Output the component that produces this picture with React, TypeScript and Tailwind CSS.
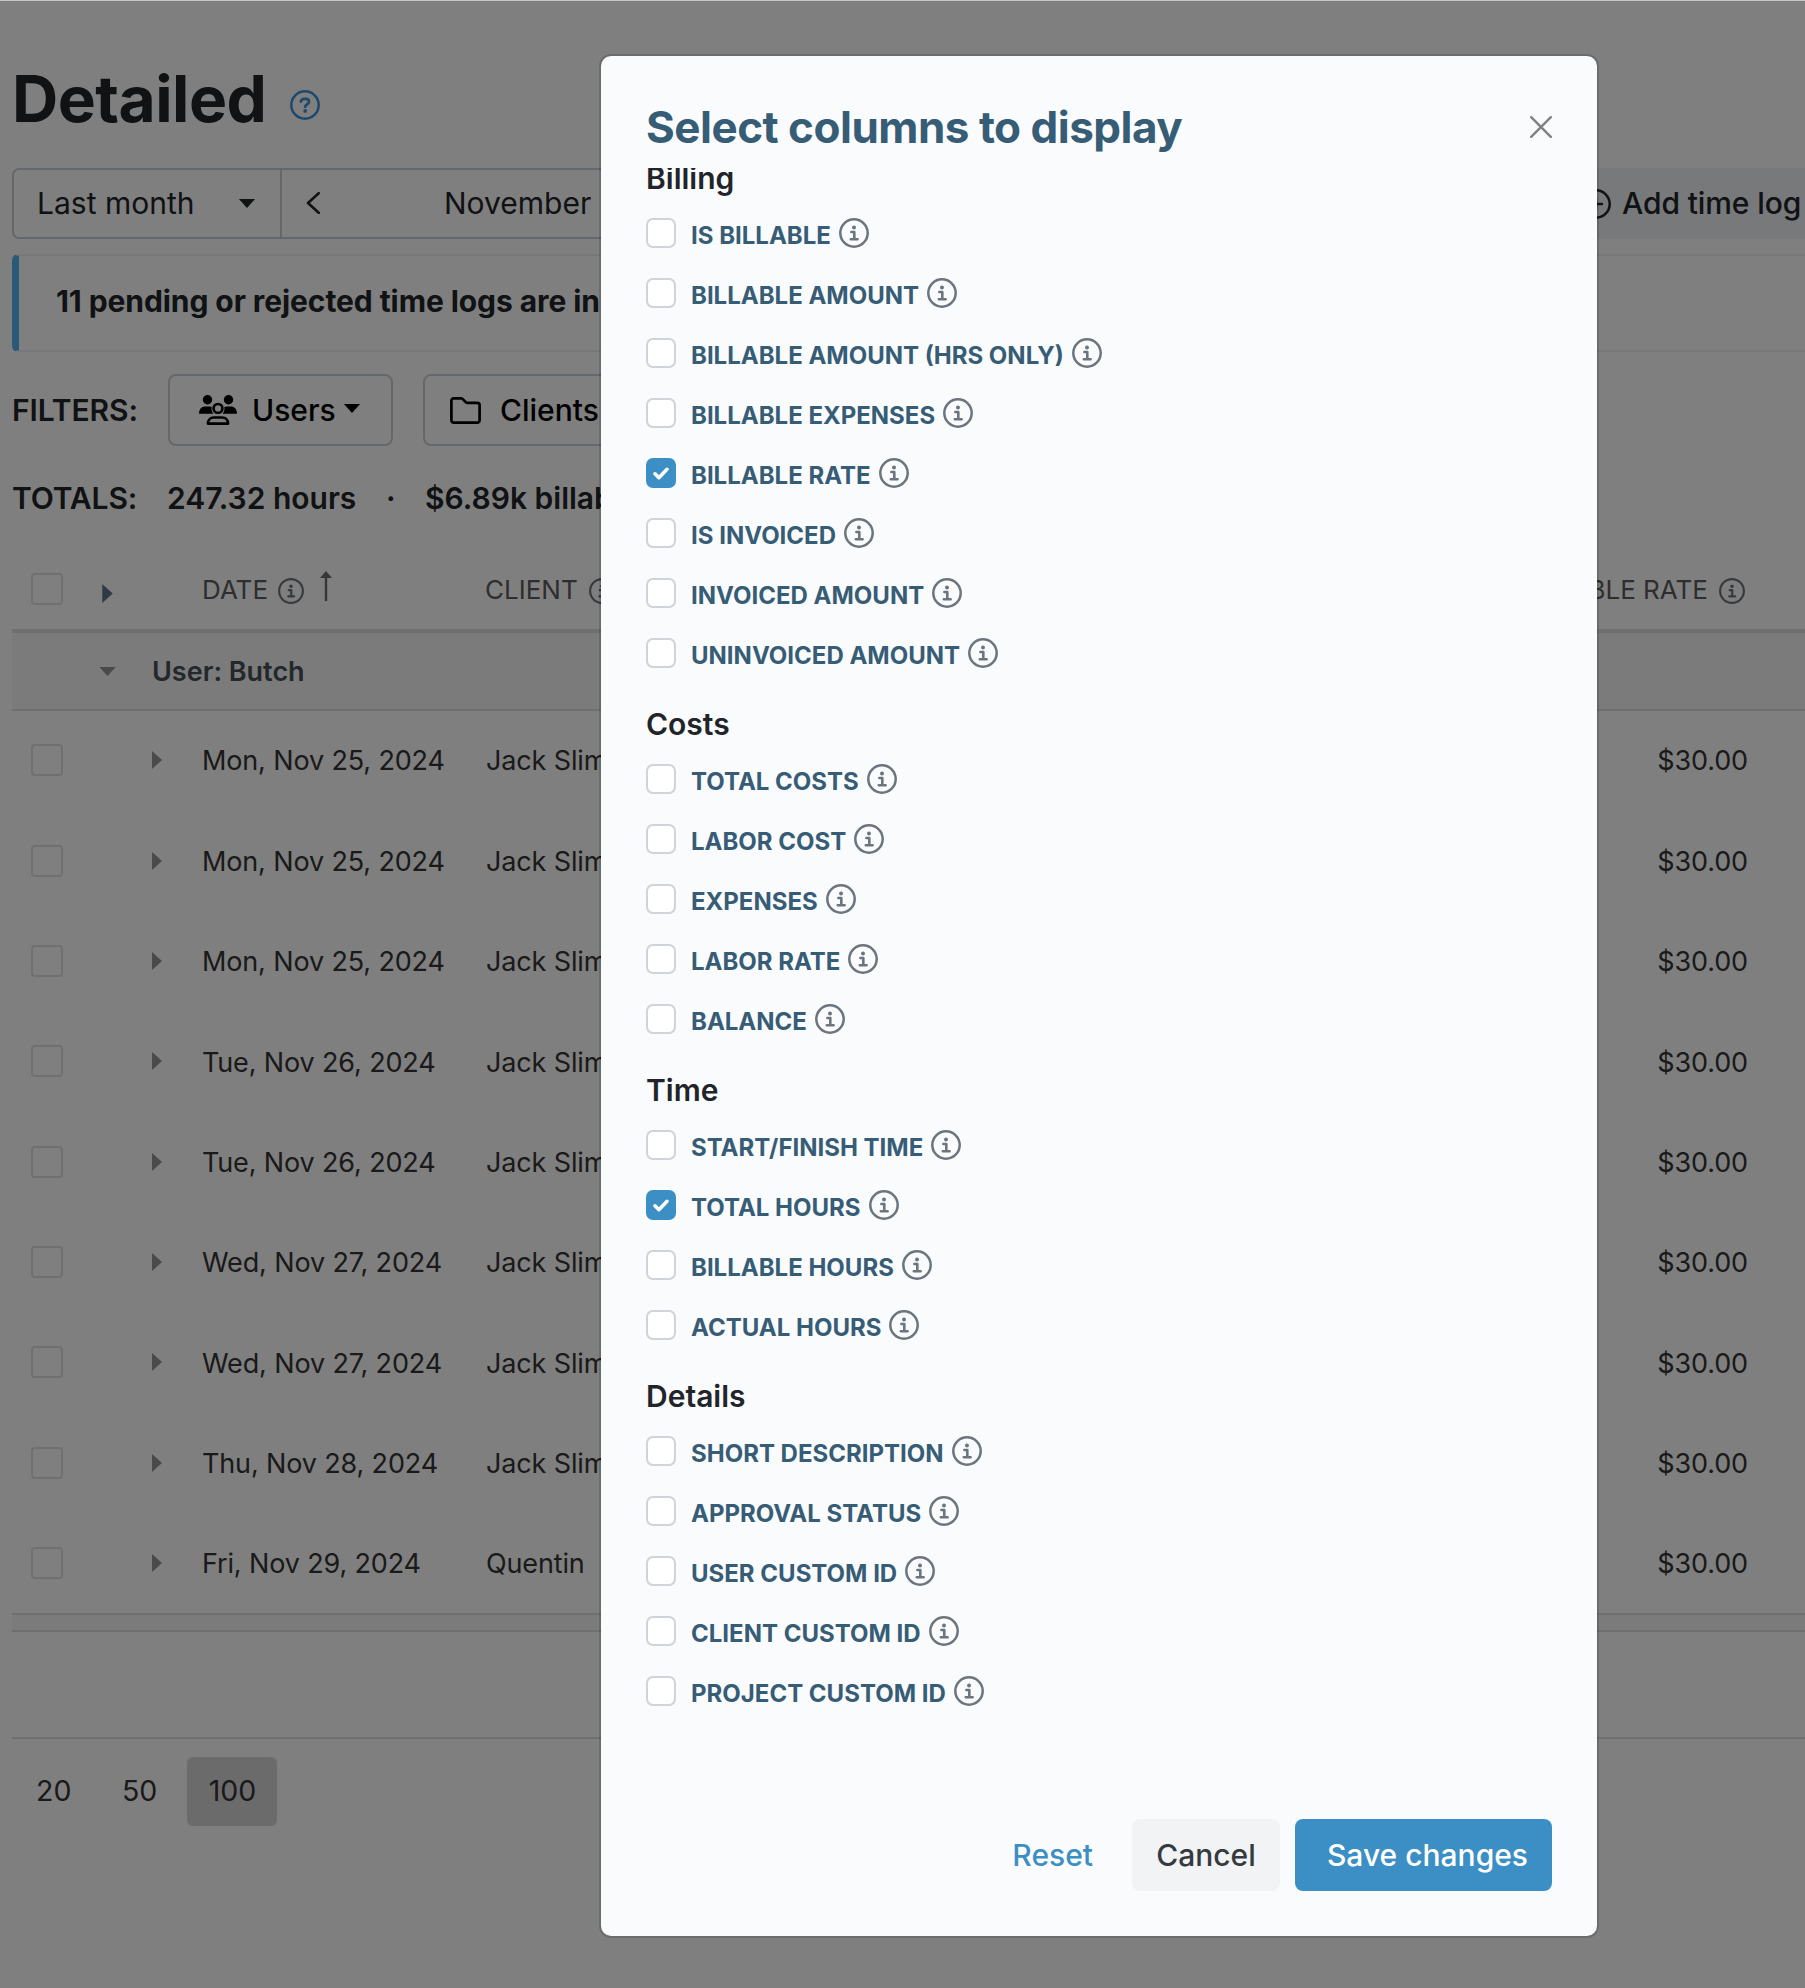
import { useState } from "react";

const sections = [
  {
    title: "Billing",
    columns: [
      "IS BILLABLE",
      "BILLABLE AMOUNT",
      "BILLABLE AMOUNT (HRS ONLY)",
      "BILLABLE EXPENSES",
      "BILLABLE RATE",
      "IS INVOICED",
      "INVOICED AMOUNT",
      "UNINVOICED AMOUNT",
    ],
  },
  {
    title: "Costs",
    columns: ["TOTAL COSTS", "LABOR COST", "EXPENSES", "LABOR RATE", "BALANCE"],
  },
  {
    title: "Time",
    columns: ["START/FINISH TIME", "TOTAL HOURS", "BILLABLE HOURS", "ACTUAL HOURS"],
  },
  {
    title: "Details",
    columns: [
      "SHORT DESCRIPTION",
      "APPROVAL STATUS",
      "USER CUSTOM ID",
      "CLIENT CUSTOM ID",
      "PROJECT CUSTOM ID",
    ],
  },
];

const logs = [
  { date: "Mon, Nov 25, 2024", client: "Jack Slim", rate: "$30.00" },
  { date: "Mon, Nov 25, 2024", client: "Jack Slim", rate: "$30.00" },
  { date: "Mon, Nov 25, 2024", client: "Jack Slim", rate: "$30.00" },
  { date: "Tue, Nov 26, 2024", client: "Jack Slim", rate: "$30.00" },
  { date: "Tue, Nov 26, 2024", client: "Jack Slim", rate: "$30.00" },
  { date: "Wed, Nov 27, 2024", client: "Jack Slim", rate: "$30.00" },
  { date: "Wed, Nov 27, 2024", client: "Jack Slim", rate: "$30.00" },
  { date: "Thu, Nov 28, 2024", client: "Jack Slim", rate: "$30.00" },
  { date: "Fri, Nov 29, 2024", client: "Quentin", rate: "$30.00" },
];

function InfoIcon({ className }: { className: string }) {
  return (
    <svg viewBox="0 0 30 30" fill="none" stroke="currentColor" className={`shrink-0 ${className}`}>
      <circle cx="15" cy="15" r="13.7" strokeWidth="2.5" />
      <circle cx="15" cy="9.4" r="2" fill="currentColor" stroke="none" />
      <path d="M12.4 14h2.9v7M11.8 21.2h6.8" strokeWidth="2.6" strokeLinecap="round" strokeLinejoin="round" />
    </svg>
  );
}

function CaretDown({ className }: { className: string }) {
  return (
    <svg viewBox="0 0 18 10" fill="currentColor" className={`shrink-0 ${className}`}>
      <path d="M0 0h18L9 10z" />
    </svg>
  );
}

function CaretRight({ className }: { className: string }) {
  return (
    <svg viewBox="0 0 10 18" fill="currentColor" className={`shrink-0 ${className}`}>
      <path d="M0 0l10 9L0 18z" />
    </svg>
  );
}

function UsersIcon() {
  return (
    <svg viewBox="0 0 38 30" fill="currentColor" className="ml-[29px] h-[30px] w-[38px] shrink-0">
      <circle cx="8.5" cy="4.7" r="4.7" />
      <circle cx="29.5" cy="4.7" r="4.7" />
      <path d="M0 18.7c0-4.6 2.6-7.2 6.3-7.2h4.2c.9 0 1.6.2 2.2.5-.5 2.6.2 5 1.7 6.7z" />
      <path d="M38 18.7c0-4.6-2.6-7.2-6.3-7.2h-4.2c-.9 0-1.6.2-2.2.5.5 2.6-.2 5-1.7 6.7z" />
      <circle cx="19" cy="13.4" r="4.4" fill="none" stroke="currentColor" strokeWidth="2.6" />
      <path
        d="M8.9 28.6c.2-3.7 2.5-6.1 5.8-6.1h8.6c3.3 0 5.6 2.4 5.8 6.1z"
        fill="none"
        stroke="currentColor"
        strokeWidth="2.6"
        strokeLinejoin="round"
      />
    </svg>
  );
}

function FolderIcon() {
  return (
    <svg viewBox="0 0 31 27" fill="none" stroke="currentColor" className="ml-[25px] h-[27px] w-[31px] shrink-0">
      <path
        d="M3.7 1.4h7.3c.7 0 1.2.2 1.7.7l3.2 3.2c.4.4.9.6 1.5.6h9.900a2.300 2.300 0 0 1 2.300 2.300v15.100a2.300 2.300 0 0 1-2.300 2.300H3.700a2.300 2.300 0 0 1-2.300-2.300V3.700a2.300 2.300 0 0 1 2.300-2.300z"
        strokeWidth="2.7"
      />
    </svg>
  );
}

function RowCheckbox() {
  return <span className="ml-[19px] size-8 shrink-0 rounded-[4px] border-2 border-[#e0e0e0]" />;
}

function Report() {
  return (
    <div className="h-full pl-3 text-[#212529]">
      <div className="flex h-[168px] pt-[60px]">
        <h1 className="w-[278px] text-[64px] leading-[78px] font-bold tracking-[-0.5px]">Detailed</h1>
        <svg viewBox="0 0 30 30" fill="none" stroke="#3a93d8" className="mt-[30px] size-[30px]">
          <circle cx="15" cy="15" r="13.7" strokeWidth="2.5" />
          <path
            d="M10.9 11.5c.3-1.8 1.5-2.7 3.6-2.7h1.1c2 0 3.4 1.2 3.4 2.9 0 2.5-3.8 2.7-3.8 5.1"
            strokeWidth="2.8"
            strokeLinecap="round"
          />
          <circle cx="15.2" cy="20.9" r="1.9" fill="#3a93d8" stroke="none" />
        </svg>
      </div>

      {/* Date range */}
      <div className="flex h-[71px] text-[30px]">
        <div className="flex w-[1300px] items-center rounded-[7px] border-2 border-[#c9d1d8]">
          <div className="flex h-full w-[268px] items-center justify-between border-r-2 border-[#c9d1d8] pr-6 pl-[23px]">
            <span>Last month</span>
            <CaretDown className="h-[9px] w-[18px]" />
          </div>
          <svg viewBox="0 0 14 22" fill="none" stroke="currentColor" className="mb-px ml-6 h-[22px] w-[14px]">
            <path d="M12.7 1.2L2 11l10.7 9.8" strokeWidth="2.6" strokeLinecap="round" strokeLinejoin="round" />
          </svg>
          <span className="ml-[124px]">November 2024</span>
        </div>
        <div className="ml-[220px] flex flex-1 items-center bg-[#eff2f6] pl-[49px] font-medium whitespace-nowrap">
          <svg viewBox="0 0 30 30" fill="none" stroke="currentColor" className="size-[30px] shrink-0" strokeWidth="2.5">
            <circle cx="15" cy="15" r="13.7" />
            <path d="M9 15h12M15 9v12" strokeLinecap="round" />
          </svg>
          <span className="ml-[11px] tracking-[-0.1px]">Add time log</span>
        </div>
      </div>

      <div className="mt-[15px] flex h-[98px] items-center rounded-l-[6px] border-y-2 border-l-[7px] border-y-[#f0f0f0] border-l-[#54b4ee] pb-[3px] pl-[37px] text-[30px] font-bold tracking-[-0.08px]">
        11 pending or rejected time logs are included
      </div>

      {/* Filters */}
      <div className="mt-[22px] flex h-[72px] items-center text-[30px]">
        <span className="w-[156px] font-semibold tracking-[-0.1px]">FILTERS:</span>
        <button className="flex h-full w-[225px] items-center rounded-[8px] border-2 border-[#c9d1d8] font-medium text-black">
          <UsersIcon />
          <span className="ml-[15px]">Users</span>
          <CaretDown className="mb-1 ml-[7px] h-[9px] w-[18px]" />
        </button>
        <button className="ml-[30px] flex h-full w-[250px] items-center rounded-[8px] border-2 border-[#c9d1d8] font-medium text-black">
          <FolderIcon />
          <span className="ml-[19px]">Clients</span>
        </button>
      </div>
      <div className="mt-[34px] flex h-9 items-center text-[30px] font-semibold">
        <span className="w-[155px] tracking-[-0.1px]">TOTALS:</span>
        <span className="w-[219px]">247.32 hours</span>
        <span className="w-[39px]">·</span>
        <span>$6.89k billable</span>
      </div>

      {/* Table */}
      <div className="mt-[33px] flex h-[84px] border-b-4 border-[#dedede] text-[26px] text-[#5c5c5c]">
        <div className="mt-[24px] flex h-8 w-full items-center">
          <RowCheckbox />
          <CaretRight className="mt-[9px] ml-[39px] h-[19px] w-[11px] text-[#60748a]" />
          <span className="ml-[89px]">DATE</span>
          <InfoIcon className="mt-[4px] ml-[10px] size-[26px] text-[#6c757d]" />
          <svg viewBox="0 0 12 30" fill="#6c6c6c" className="mb-[7px] ml-4 h-[30px] w-3">
            <path d="M6 0l6 7H7.2v23H4.800V7H0z" />
          </svg>
          <span className="ml-[153px]">CLIENT</span>
          <InfoIcon className="mt-[4px] ml-[11px] size-[26px] text-[#6c757d]" />
          <div className="ml-auto flex items-center pr-[60px]">
            <span>BILLABLE RATE</span>
            <InfoIcon className="mt-[4px] ml-[11px] size-[26px] text-[#6c757d]" />
          </div>
        </div>
      </div>
      <div className="flex h-[78px] items-center border-b-2 border-[#dedede] bg-[#f6f6f6] text-[27px] font-semibold text-[#495057]">
        <CaretDown className="ml-[87px] h-[9px] w-[17px] text-[#949494]" />
        <span className="mt-0.5 ml-9">User: Butch</span>
      </div>
      <div className="-mt-px h-[903px] text-[27px] tracking-[-0.14px] text-[#343434]">
        {logs.map((log, i) => (
          <div key={i} className="flex h-[100.375px] items-center">
            <RowCheckbox />
            <CaretRight className="ml-[89px] h-[18px] w-[10px] text-[#949494]" />
            <span className="mt-[3px] ml-[40px] w-[284px]">{log.date}</span>
            <span className="mt-[3px]">{log.client}</span>
            <span className="mt-[3px] ml-auto pr-[57px]">{log.rate}</span>
          </div>
        ))}
      </div>
      <div className="h-[19px] border-y-2 border-[#dedede] bg-[#f6f6f6]" />
      <div className="h-[107px] border-b-2 border-[#dedede]" />
      <div className="mt-[18px] flex h-[69px] items-center text-[28.5px] text-[#343434]">
        <span className="w-[87px] pl-6">20</span>
        <span className="w-[88px] pl-[23px]">50</span>
        <span className="flex h-full w-[90px] items-center justify-center rounded-[6px] bg-[#d6d6d6] pl-px">100</span>
      </div>
    </div>
  );
}

export default function App() {
  const [selected, setSelected] = useState(["BILLABLE RATE", "TOTAL HOURS"]);

  const toggle = (name: string) => {
    setSelected((prev) => (prev.includes(name) ? prev.filter((n) => n !== name) : [...prev, name]));
  };

  return (
    <div className="relative h-[1988px] w-[1805px] overflow-hidden bg-white font-[Inter,sans-serif]">
      <Report />

      {/* Backdrop */}
      <div className="absolute inset-0 border-t border-[#c6c6c6] bg-black/50" />

      {/* Modal */}
      <div className="absolute top-[54px] left-[599px] flex h-[1884px] w-[1000px] flex-col rounded-[12px] border-2 border-black/15 bg-[#fafbfd] bg-clip-padding px-[45px]">
        <div className="flex h-[112px] shrink-0 justify-between pt-[44px]">
          <h2 className="text-[44px] leading-[54px] font-bold tracking-[-0.5px] text-[#375d76]">
            Select columns to display
          </h2>
          <svg viewBox="0 0 22 22" stroke="#808080" className="mt-[16px] size-[22px]">
            <path d="M1.200 1.200l19.600 19.600M20.800 1.200L1.200 20.800" strokeWidth="2.400" strokeLinecap="round" />
          </svg>
        </div>

        <div className="h-[1590px] overflow-hidden">
          <div className="-mt-2">
            {sections.map((section) => (
              <section key={section.title} className="mb-[38px]">
                <h3 className="mb-[22px] text-[30px] leading-9 font-semibold text-[#212529]">{section.title}</h3>
                <div className="flex flex-col gap-[30px]">
                  {section.columns.map((name) => (
                    <div key={name} className="flex h-[30px] items-center" onClick={() => toggle(name)}>
                      {selected.includes(name) ? (
                        <span className="flex size-[30px] items-center justify-center rounded-[7px] bg-[#3b8fc5]">
                          <svg viewBox="0 0 16 13" fill="none" stroke="white" className="h-[13px] w-4">
                            <path d="M2 6.8l3.9 3.9L14 2.3" strokeWidth="3.5" strokeLinecap="round" strokeLinejoin="round" />
                          </svg>
                        </span>
                      ) : (
                        <span className="size-[30px] rounded-[7px] border-2 border-[#ced4da] bg-white" />
                      )}
                      <span className="mt-1.5 ml-[15px] text-[24px] font-bold text-[#375d76]">{name}</span>
                      <InfoIcon className="ml-2 size-[30px] text-[#6c757d]" />
                    </div>
                  ))}
                </div>
              </section>
            ))}
          </div>
        </div>

        <div className="mt-[61px] flex h-[72px] items-center justify-end text-[30px] font-medium">
          <button className="mr-[39px] text-[#3b8fc5]">Reset</button>
          <button className="mr-[15px] h-full w-[148px] rounded-[8px] bg-[#f1f3f5] text-[#343a40]">Cancel</button>
          <button className="h-full w-[257px] rounded-[8px] bg-[#3b8fc5] pl-2 text-white">Save changes</button>
        </div>
      </div>
    </div>
  );
}
